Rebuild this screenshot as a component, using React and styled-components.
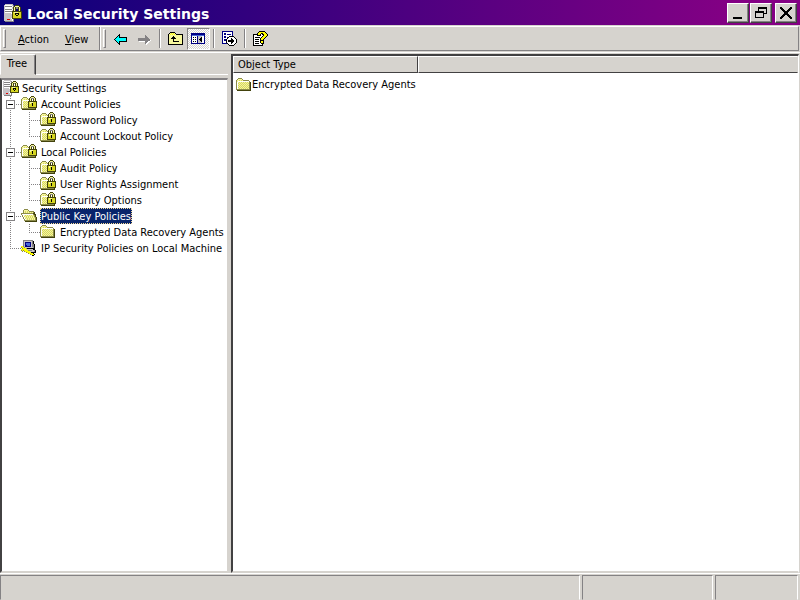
import React from "react";
import styled, { createGlobalStyle, css } from "styled-components";

const FACE = "#d6d3ce";
const SHADOW = "#848284";
const DARK = "#424142";

const GlobalStyle = createGlobalStyle`
  * { box-sizing: border-box; }
  body {
    margin: 0;
    background: ${FACE};
    color: #000;
    font: 11px/16px "DejaVu Sans Condensed", "DejaVu Sans", sans-serif;
  }
  button { font: inherit; color: inherit; border: 0; padding: 0; background: none; }
`;

/* ---------- pixel icons ---------- */

const PALETTE = {
  k: "#000000",
  e: "#42420c",
  o: "#8c8c4a",
  y: "#f7f79c",
  d: "#d6d663",
  w: "#ffffff",
  g: "#848284",
  l: "#c6c3c6",
  n: "#000084",
  b: "#4a6bd6",
  c: "#00ffff",
  r: "#e00000",
  a: "#ffff00",
  s: "#d6d621",
};

const ICONS = {
  folder: [
    "................",
    "..oooo..........",
    ".oyyyyo.........",
    "oyydydyoooooo...",
    "oywwwwwwwwwwwo..",
    "owydydydydydyoe.",
    "owdydydydydydoe.",
    "owydydydydydyoe.",
    "owdydydydydydoe.",
    "owydydydydydyoe.",
    "owdydydydydydoe.",
    "owydydydydydyoe.",
    "ooooooooooooooe.",
    ".eeeeeeeeeeeeee.",
    "................",
    "................",
  ],
  lockedFolder: [
    "..........eee...",
    "..oooo...eyyye..",
    ".oyyyyo.eygggye.",
    "oyydydyoeye.eye.",
    "oywwwwwweye.eye.",
    "owydydyeeeeeeeee",
    "owdydydesyyyssse",
    "owydydyesyskssse",
    "owdydydessskssse",
    "owydydyessskssse",
    "owdydydessssssse",
    "owydydyeeeeeeeee",
    "ooooooooooooooe.",
    ".eeeeeeeeeeeeee.",
    "................",
    "................",
  ],
  openFolder: [
    "................",
    "...oooo.........",
    "..oyyyyo........",
    "..oydydyooooo...",
    "..oydydydydyoe..",
    "ooooooooooooee..",
    "owwwwwwwwwwwoee.",
    ".owydydydydydoe.",
    ".owdydydydydyoe.",
    "..owydydydydydoe",
    "..owdydydydydyoe",
    "...owydydydydyoe",
    "...ooooooooooooe",
    "....eeeeeeeeeeee",
    "................",
    "................",
  ],
  server: [
    ".lllllll........",
    "lwwwwwwlg.eee...",
    "lggggggwgeyyye..",
    "lwwwwwwleyegeye.",
    "lggggggweye.eye.",
    "lwwwwwwleye.eye.",
    "lggggggeeeeeeeee",
    "lwwwwwwesyyyssse",
    "llllllwesskkksse",
    "lllllllessksksse",
    "lllllllessskssse",
    "lllllllessssssse",
    "llllllweeeeeeeee",
    "lllrrllwg.......",
    "lllllllwg.......",
    ".gggggggg.......",
  ],
  ipSecurity: [
    "..gggggggggg....",
    "..gllllllllgk...",
    "..glnnnnnnlgk...",
    "..glnbbbbnlgk...",
    "..glnbbbbnlggk..",
    "..glnnbbbnlggk..",
    "aaglnnnnnnlggk..",
    "oaagllllllllgk..",
    ".oaaagkkkkkkkk..",
    "aaaaaallllllkk..",
    "oaoaaaaggggllgk.",
    ".o.oaaaaallllgk.",
    ".....oaaaakkkkk.",
    ".......oaaaak...",
    ".........oaaak..",
    "...........kk...",
  ],
  back: [
    "................",
    "................",
    "................",
    ".....k..........",
    "....kk..........",
    "...kck..........",
    "..kcckkkkkkkk...",
    ".kcccccccccck...",
    "kccccccccccck...",
    ".kcccccccccck...",
    "..kcckkkkkkkk...",
    "...kck..........",
    "....kk..........",
    ".....k..........",
    "................",
    "................",
  ],
  forward: [
    "................",
    "................",
    "................",
    "................",
    "........g.......",
    "........gg......",
    "........ggg.....",
    ".ggggggggggg....",
    ".gggggggggggg...",
    ".ggggggggggggw..",
    "..wwwwwwgggww...",
    "........ggww....",
    "........gww.....",
    ".........w......",
    "................",
    "................",
  ],
  up: [
    "................",
    "..kkkkk.........",
    ".kyayayk........",
    "kyayayaykkkkkkk.",
    "kyyyyyyyyyyyyyk.",
    "kyyyykyyyyyyyyk.",
    "kyyykkkyyyyyyyk.",
    "kyykkkkkyyyyyyk.",
    "kyyyykyyyyyyyyk.",
    "kyyyykyyyyyyyyk.",
    "kyyyykkkkkkyyyk.",
    "kyyyyyyyyyyyyyk.",
    "kyyyyyyyyyyyyyk.",
    "kkkkkkkkkkkkkkk.",
    "................",
    "................",
  ],
  panes: [
    "................",
    "................",
    "nnnnnnnnnnnnnn..",
    "nnnnnnnnnnnnnn..",
    "nbbbbbbbbbbbbn..",
    "nwwwwwnllllwwn..",
    "nwkwkwnlllkwwn..",
    "nwwwwwnllkkwwn..",
    "nwkwkwnlkkkwwn..",
    "nwwwwwnllkkwwn..",
    "nwkwkwnlllkwwn..",
    "nwwwwwnllllwwn..",
    "nnnnnnnnnnnnnn..",
    "................",
    "................",
    "................",
  ],
  exportList: [
    "nnnnnnnnnnn.....",
    "nwwwwwwwwwn.....",
    "nwnnwwwwwwn.....",
    "nwnnwnnnnwn.....",
    "nwwwwwwwwwn.....",
    "nwnnwwwkkkkk....",
    "nwnnwnkwwwwwk...",
    "nwwwwkwwwkwwwk..",
    "nwnnkwwwwkkwwwk.",
    "nwnnkwkkkkkkwwk.",
    "nwwwkwkkkkkkwwk.",
    "nwwwkwwwwkkwwwk.",
    "nnnnnkwwwkwwwk..",
    "......kwwwwwk...",
    ".......kkkkk....",
    "................",
  ],
  help: [
    "......kkkkkk....",
    ".....kaaaaaak...",
    "....kaaakkaaak..",
    "kkkkkaakwkkaaak.",
    "kwwwkkkkwwkaaak.",
    "kwwwwwwwwkaaak..",
    "kwkkkkkwkaaak...",
    "kwwwwwwkaaak....",
    "kwkkkkwkaak.....",
    "kwwwwwwkkkk.....",
    "kwkkkkwkaak.....",
    "kwwwwwwkaak.....",
    "kwkkkkwwkkk.....",
    "kwwwwwwwwk......",
    "kkkkkkkkkk......",
    "................",
  ],
  minimize: [
    "................", "................", "................", "................",
    "................", "................", "................", "................",
    "................", "................", "................", "................",
    "...kkkkkkkkk....", "...kkkkkkkkk....", "................", "................",
  ],
  restore: [
    "................",
    "................",
    ".....kkkkkkkkk..",
    ".....kkkkkkkkk..",
    ".....k.......k..",
    ".....k.......k..",
    "..kkkkkkkkk..k..",
    "..kkkkkkkkk..k..",
    "..k.......kkkk..",
    "..k.......k.....",
    "..k.......k.....",
    "..k.......k.....",
    "..kkkkkkkkk.....",
    "................", "................", "................",
  ],
  close: [
    "................",
    "................",
    "..kk........kk..",
    "..kkk......kkk..",
    "...kkk....kkk...",
    "....kkk..kkk....",
    ".....kkkkkk.....",
    "......kkkk......",
    "......kkkk......",
    ".....kkkkkk.....",
    "....kkk..kkk....",
    "...kkk....kkk...",
    "..kkk......kkk..",
    "..kk........kk..",
    "................", "................",
  ],
};

const Glyph = styled.svg`
  display: block;
  flex: none;
  width: ${(p) => p.$size || 16}px;
  height: ${(p) => p.$size || 16}px;
`;

function Icon({ name, size }) {
  const paths = {};
  ICONS[name].forEach((row, y) => {
    [...row].forEach((key, x) => {
      if (key !== ".") paths[key] = (paths[key] || "") + `M${x} ${y}h1v1h-1z`;
    });
  });
  return (
    <Glyph $size={size} viewBox="0 0 16 16" shapeRendering="crispEdges" aria-hidden="true">
      {Object.entries(paths).map(([key, d]) => (
        <path key={key} d={d} fill={PALETTE[key]} />
      ))}
    </Glyph>
  );
}

/* ---------- window chrome ---------- */

const Window = styled.div`
  display: flex;
  flex-direction: column;
  height: 100vh;
  overflow: hidden;
`;

const TitleBar = styled.header`
  display: flex;
  align-items: center;
  flex: none;
  height: 25px;
  padding: 0 3px 0 4px;
  background: linear-gradient(to right, #08007b, #840084 92%);
`;

const Title = styled.h1`
  flex: 1;
  margin: 0;
  padding: 2px 0 0 5px;
  color: #fff;
  font: bold 14px/20px "DejaVu Sans", sans-serif;
`;

const CaptionButtons = styled.div`
  display: flex;
`;

const CaptionButton = styled.button`
  display: grid;
  place-items: center;
  width: 22px;
  height: 20px;
  margin-left: ${(p) => (p.$apart ? 3 : 1)}px;
  background: ${FACE};
  border: 1px solid;
  border-color: #fff ${DARK} ${DARK} #fff;
  box-shadow: inset -1px -1px ${SHADOW};
`;

const ToolBar = styled.div`
  display: flex;
  align-items: center;
  flex: none;
  height: 25px;
  margin: 1px 1px 0 0;
  border: 1px solid;
  border-color: #fff ${SHADOW} ${SHADOW} #fff;
`;

const Grip = styled.span`
  width: 3px;
  height: 19px;
  margin: 0 4px 0 2px;
  border: 1px solid;
  border-color: #fff ${SHADOW} ${SHADOW} #fff;
`;

const Separator = styled.span`
  width: 2px;
  height: ${(p) => (p.$full ? 23 : 19)}px;
  margin: 0 ${(p) => (p.$full ? 0 : 3)}px;
  border-left: 1px solid ${SHADOW};
  border-right: 1px solid #fff;
`;

const MenuButton = styled.button`
  height: 20px;
  padding: 2px 8px 0;
  &::first-letter { text-decoration: underline; }
`;

const MenuGroup = styled.div`
  display: flex;
  width: 89px;
`;

const ToolButton = styled.button`
  display: grid;
  place-items: center;
  width: 23px;
  height: 22px;
  ${(p) =>
    p.$pressed &&
    css`
      background: repeating-conic-gradient(#fff 0 25%, ${FACE} 0 50%) 0 0 / 2px 2px;
      border: 1px solid;
      border-color: ${SHADOW} #fff #fff ${SHADOW};
    `}
`;

/* ---------- panes ---------- */

const Workspace = styled.main`
  display: grid;
  grid-template-columns: 228px minmax(0, 1fr);
  column-gap: 3px;
  flex: 1;
  min-height: 0;
  margin-top: 1px;
  padding: 1px 1px 0 0;
  border-top: 1px solid #fff;
`;

const TreePane = styled.section`
  display: flex;
  flex-direction: column;
  min-height: 0;
`;

const TabStrip = styled.div`
  display: flex;
  flex: none;
  height: 24px;
`;

const Tab = styled.button`
  width: 36px;
  height: 21px;
  padding: 0 2px 2px 0;
  border: 1px solid;
  border-color: #fff ${DARK} transparent #fff;
  border-radius: 2px 2px 0 0;
  box-shadow: inset -1px 0 ${SHADOW};
`;

const TabRule = styled.span`
  flex: 1;
  height: 21px;
  border-bottom: 1px solid #fff;
`;

const sunken = css`
  background: #fff;
  border: 2px solid;
  border-color: ${DARK} ${FACE} ${FACE} ${DARK};
  box-shadow: inset 0 1px ${DARK};
`;

const Tree = styled.ul`
  ${sunken}
  flex: 1;
  min-height: 0;
  margin: 0;
  padding: 0;
  list-style: none;
  overflow: hidden;
  border-top-color: ${SHADOW};
  border-right-width: 1px;
  box-shadow: none;
`;

const TreeRow = styled.li`
  display: flex;
  height: 16px;
`;

const hDots = "repeating-linear-gradient(to right, #848284 0 1px, transparent 1px 2px)";
const vDots = "repeating-linear-gradient(to bottom, #848284 0 1px, transparent 1px 2px)";

const Guide = styled.span`
  display: grid;
  align-items: center;
  flex: none;
  width: 19px;
  padding-left: 4px;
  background-repeat: no-repeat;
  background-image: ${(p) => (p.$kind === "line" ? vDots : p.$kind === "none" ? "none" : `${vDots}, ${hDots}`)};
  background-size: 1px ${(p) => (p.$kind === "end" ? "8px" : "16px")}, 11px 1px;
  background-position: 8px 0, 8px 8px;
`;

const Expander = styled.button`
  display: grid;
  place-items: center;
  width: 9px;
  height: 9px;
  background: #fff;
  border: 1px solid ${SHADOW};
  &::before {
    content: "";
    width: 5px;
    height: 1px;
    background: #000;
  }
`;

const IconSlot = styled.span`
  flex: none;
  width: 19px;
  padding-left: ${(p) => (p.$root ? 1 : 0)}px;
`;

const Label = styled.span`
  padding: 1px 1px 0;
  white-space: nowrap;
  line-height: 15px;
  ${(p) =>
    p.$selected &&
    css`
      background: #08246b;
      color: #fff;
      outline: 1px dotted #f7db94;
      outline-offset: -1px;
    `}
`;

const ListPane = styled.section`
  ${sunken}
  min-height: 0;
  overflow: hidden;
  border-right: 1px solid #fff;
`;

const Table = styled.table`
  width: 100%;
  border-collapse: separate;
  border-spacing: 0;
  table-layout: fixed;
`;

const HeadCell = styled.th`
  width: ${(p) => (p.$first ? "185px" : "auto")};
  height: 17px;
  padding: 1px 4px 0;
  text-align: left;
  font-weight: normal;
  line-height: 14px;
  background: ${FACE};
  border: 1px solid;
  border-color: #fff ${(p) => (p.$first ? DARK : FACE)} ${DARK} #fff;
`;

const Cell = styled.td`
  height: 20px;
  padding: 3px 0 0 3px;
`;

const Item = styled.div`
  display: flex;
`;

const StatusBar = styled.footer`
  display: grid;
  grid-template-columns: minmax(0, 1fr) 131px 83px;
  gap: 2px;
  flex: none;
  height: 27px;
  padding: 1px 2px 0 0;
  border-top: 1px solid #fff;
`;

const StatusCell = styled.div`
  border: 1px solid;
  border-color: ${SHADOW} #fff transparent ${SHADOW};
`;

const NODES = [
  { label: "Security Settings", icon: "server", guides: [], root: true },
  { label: "Account Policies", icon: "lockedFolder", guides: ["tee"], open: true },
  { label: "Password Policy", icon: "lockedFolder", guides: ["line", "tee"] },
  { label: "Account Lockout Policy", icon: "lockedFolder", guides: ["line", "end"] },
  { label: "Local Policies", icon: "lockedFolder", guides: ["tee"], open: true },
  { label: "Audit Policy", icon: "lockedFolder", guides: ["line", "tee"] },
  { label: "User Rights Assignment", icon: "lockedFolder", guides: ["line", "tee"] },
  { label: "Security Options", icon: "lockedFolder", guides: ["line", "end"] },
  { label: "Public Key Policies", icon: "openFolder", guides: ["tee"], open: true, selected: true },
  { label: "Encrypted Data Recovery Agents", icon: "folder", guides: ["line", "end"] },
  { label: "IP Security Policies on Local Machine", icon: "ipSecurity", guides: ["end"] },
];

export default function App() {
  return (
    <Window>
      <GlobalStyle />
      <TitleBar>
        <Icon name="server" size={18} />
        <Title>Local Security Settings</Title>
        <CaptionButtons>
          <CaptionButton aria-label="Minimize"><Icon name="minimize" /></CaptionButton>
          <CaptionButton aria-label="Restore"><Icon name="restore" /></CaptionButton>
          <CaptionButton aria-label="Close" $apart><Icon name="close" /></CaptionButton>
        </CaptionButtons>
      </TitleBar>
      <ToolBar role="toolbar">
        <Grip />
        <MenuGroup>
          <MenuButton>Action</MenuButton>
          <MenuButton>View</MenuButton>
        </MenuGroup>
        <Separator $full />
        <Grip />
        <ToolButton aria-label="Back"><Icon name="back" /></ToolButton>
        <ToolButton aria-label="Forward"><Icon name="forward" /></ToolButton>
        <Separator />
        <ToolButton aria-label="Up one level"><Icon name="up" /></ToolButton>
        <ToolButton aria-label="Show or hide console tree" aria-pressed="true" $pressed><Icon name="panes" /></ToolButton>
        <Separator />
        <ToolButton aria-label="Export list"><Icon name="exportList" /></ToolButton>
        <Separator />
        <ToolButton aria-label="Help"><Icon name="help" /></ToolButton>
      </ToolBar>
      <Workspace>
        <TreePane>
          <TabStrip role="tablist">
            <Tab role="tab" aria-selected="true">Tree</Tab>
            <TabRule />
          </TabStrip>
          <Tree role="tree">
            {NODES.map((node) => (
              <TreeRow
                key={node.label}
                role="treeitem"
                aria-level={node.guides.length + 1}
                aria-selected={!!node.selected}
              >
                {node.guides.map((kind, i) => (
                  <Guide key={i} $kind={kind}>
                    {node.open && i === node.guides.length - 1 && (
                      <Expander aria-label={`Collapse ${node.label}`} />
                    )}
                  </Guide>
                ))}
                <IconSlot $root={node.root}><Icon name={node.icon} /></IconSlot>
                <Label $selected={node.selected}>{node.label}</Label>
              </TreeRow>
            ))}
          </Tree>
        </TreePane>
        <ListPane>
          <Table>
            <thead>
              <tr>
                <HeadCell $first scope="col">Object Type</HeadCell>
                <HeadCell as="td" />
              </tr>
            </thead>
            <tbody>
              <tr>
                <Cell colSpan={2}>
                  <Item>
                    <Icon name="folder" />
                    <span>Encrypted Data Recovery Agents</span>
                  </Item>
                </Cell>
              </tr>
            </tbody>
          </Table>
        </ListPane>
      </Workspace>
      <StatusBar>
        <StatusCell />
        <StatusCell />
        <StatusCell />
      </StatusBar>
    </Window>
  );
}
